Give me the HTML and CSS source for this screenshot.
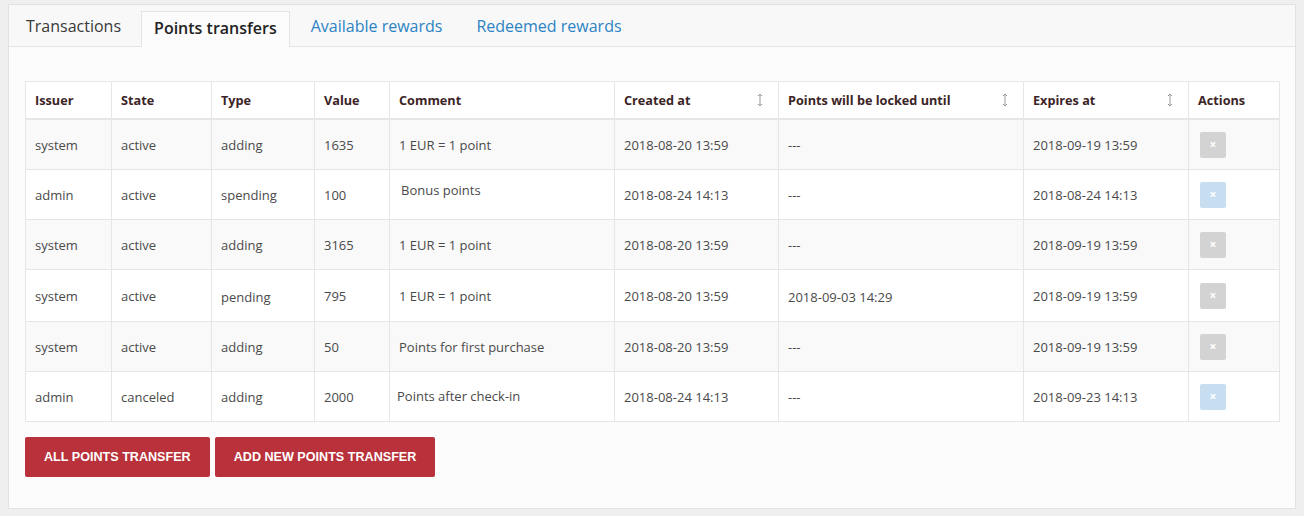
FILE: index.html
```html
<!DOCTYPE html>
<html lang="en">
<head>
<meta charset="utf-8">
<title>Points transfers</title>
<link rel="stylesheet" href="styles.css">
</head>
<body>
<div class="panel">
  <ul class="tabs">
    <li class="tab tab-muted">Transactions</li>
    <li class="tab tab-active">Points transfers</li>
    <li class="tab tab-link">Available rewards</li>
    <li class="tab tab-link">Redeemed rewards</li>
  </ul>
  <div class="panel-body">
    <table class="grid">
      <colgroup>
        <col class="c-issuer"><col class="c-state"><col class="c-type"><col class="c-value"><col class="c-comment"><col class="c-created"><col class="c-locked"><col class="c-expires"><col class="c-actions">
      </colgroup>
      <thead>
        <tr>
          <th>Issuer</th>
          <th>State</th>
          <th>Type</th>
          <th>Value</th>
          <th>Comment</th>
          <th><div class="sortable"><span>Created at</span><svg class="sort" width="6" height="14" viewBox="0 0 6 14"><path d="M3 1V13M1 3L3 1L5 3M1 11L3 13L5 11" fill="none" stroke="#9a9a9a" stroke-width="1"/></svg></div></th>
          <th><div class="sortable"><span>Points will be locked until</span><svg class="sort" width="6" height="14" viewBox="0 0 6 14"><path d="M3 1V13M1 3L3 1L5 3M1 11L3 13L5 11" fill="none" stroke="#9a9a9a" stroke-width="1"/></svg></div></th>
          <th><div class="sortable"><span>Expires at</span><svg class="sort" width="6" height="14" viewBox="0 0 6 14"><path d="M3 1V13M1 3L3 1L5 3M1 11L3 13L5 11" fill="none" stroke="#9a9a9a" stroke-width="1"/></svg></div></th>
          <th>Actions</th>
        </tr>
      </thead>
      <tbody>
        <tr>
          <td>system</td><td>active</td><td>adding</td><td>1635</td><td>1 EUR = 1 point</td>
          <td>2018-08-20 13:59</td><td>---</td><td>2018-09-19 13:59</td>
          <td><span class="act act-grey">&#215;</span></td>
        </tr>
        <tr>
          <td>admin</td><td>active</td><td>spending</td><td>100</td><td><span class="note-shift">Bonus points</span></td>
          <td>2018-08-24 14:13</td><td>---</td><td>2018-08-24 14:13</td>
          <td><span class="act act-blue">&#215;</span></td>
        </tr>
        <tr>
          <td>system</td><td>active</td><td>adding</td><td>3165</td><td>1 EUR = 1 point</td>
          <td>2018-08-20 13:59</td><td>---</td><td>2018-09-19 13:59</td>
          <td><span class="act act-grey">&#215;</span></td>
        </tr>
        <tr>
          <td>system</td><td>active</td><td class="low">pending</td><td>795</td><td>1 EUR = 1 point</td>
          <td>2018-08-20 13:59</td><td class="low">2018-09-03 14:29</td><td>2018-09-19 13:59</td>
          <td><span class="act act-grey">&#215;</span></td>
        </tr>
        <tr>
          <td>system</td><td>active</td><td>adding</td><td>50</td><td>Points for first purchase</td>
          <td>2018-08-20 13:59</td><td>---</td><td>2018-09-19 13:59</td>
          <td><span class="act act-grey">&#215;</span></td>
        </tr>
        <tr>
          <td>admin</td><td>canceled</td><td>adding</td><td>2000</td><td><span class="note-left">Points after check-in</span></td>
          <td>2018-08-24 14:13</td><td>---</td><td>2018-09-23 14:13</td>
          <td><span class="act act-blue">&#215;</span></td>
        </tr>
      </tbody>
    </table>
    <div class="buttons">
      <button class="btn">ALL POINTS TRANSFER</button>
      <button class="btn">ADD NEW POINTS TRANSFER</button>
    </div>
  </div>
</div>
</body>
</html>
```

FILE: styles.css
```css
html, body {
  margin: 0;
  padding: 0;
}
body {
  background: #efefef;
  font-family: "Open Sans", "Liberation Sans", sans-serif;
  padding: 4px 8px 8px 8px;
}
.panel {
  background: #fcfcfc;
  border: 1px solid #e2e2e2;
  height: 505px;
  box-sizing: border-box;
}
.tabs {
  list-style: none;
  margin: 0;
  padding: 6px 0 0 1px;
  display: flex;
  align-items: flex-end;
  gap: 2px;
  background: #f8f8f8;
  border-bottom: 1px solid #e4e4e4;
  height: 35px;
}
.tab {
  font-size: 16px;
  padding: 0 15px;
  height: 36px;
  line-height: 28px;
  box-sizing: border-box;
  margin-bottom: -1px;
  border: 1px solid transparent;
  border-bottom: none;
}
.tab-muted {
  color: #3a3a3a;
}
.tab-active {
  background: #fcfcfc;
  border-color: #e4e4e4;
  color: #222;
  font-weight: 600;
  padding: 0 12px;
  line-height: 32px;
  margin-left: 2px;
  margin-right: 3px;
}
.tab-link {
  color: #2c83c3;
  font-weight: 500;
}
.panel-body {
  padding: 34px 16px 0 16px;
}
.grid {
  width: 1254px;
  table-layout: fixed;
  border-collapse: collapse;
  font-size: 13px;
  color: #4a4a4a;
}
.c-issuer { width: 86px; }
.c-state { width: 100px; }
.c-type { width: 103px; }
.c-value { width: 75px; }
.c-comment { width: 225px; }
.c-created { width: 164px; }
.c-locked { width: 245px; }
.c-expires { width: 165px; }
.c-actions { width: 91px; }
.grid th, .grid td {
  border: 1px solid #e6e6e6;
  text-align: left;
  padding: 0 9px;
  white-space: nowrap;
}
.grid th {
  height: 36px;
  background: #ffffff;
  color: #3b2426;
  font-weight: 700;
  font-size: 12.7px;
  border-bottom: 2px solid #e6e6e6;
}
.sortable {
  display: flex;
  align-items: center;
  justify-content: space-between;
}
.sort {
  margin-right: 6px;
}
.grid td {
  height: 49px;
}
.grid tbody tr:nth-child(odd) td {
  background: #f9f9f9;
}
.grid tbody tr:nth-child(even) td {
  background: #ffffff;
}
.low {
  padding-top: 2px !important;
}
.note-shift {
  display: inline-block;
  margin-left: 2px;
  padding-bottom: 10px;
}
.note-left {
  display: inline-block;
  margin-left: -2px;
  padding-bottom: 2px;
}
.act {
  display: inline-flex;
  align-items: center;
  justify-content: center;
  width: 26px;
  height: 26px;
  margin-left: 2px;
  border-radius: 2px;
  color: #ffffff;
  font-size: 12px;
  font-weight: 700;
  line-height: 1;
}
.act-grey {
  background: #d3d3d3;
}
.act-blue {
  background: #c6def0;
}
.buttons {
  display: flex;
  gap: 5px;
  margin-top: 15px;
}
.btn {
  background: #b9313a;
  color: #ffffff;
  border: none;
  border-radius: 2px;
  height: 40px;
  padding: 0 19px;
  font-family: "Liberation Sans", Arial, sans-serif;
  font-weight: 700;
  font-size: 12.6px;
  cursor: pointer;
}
```
